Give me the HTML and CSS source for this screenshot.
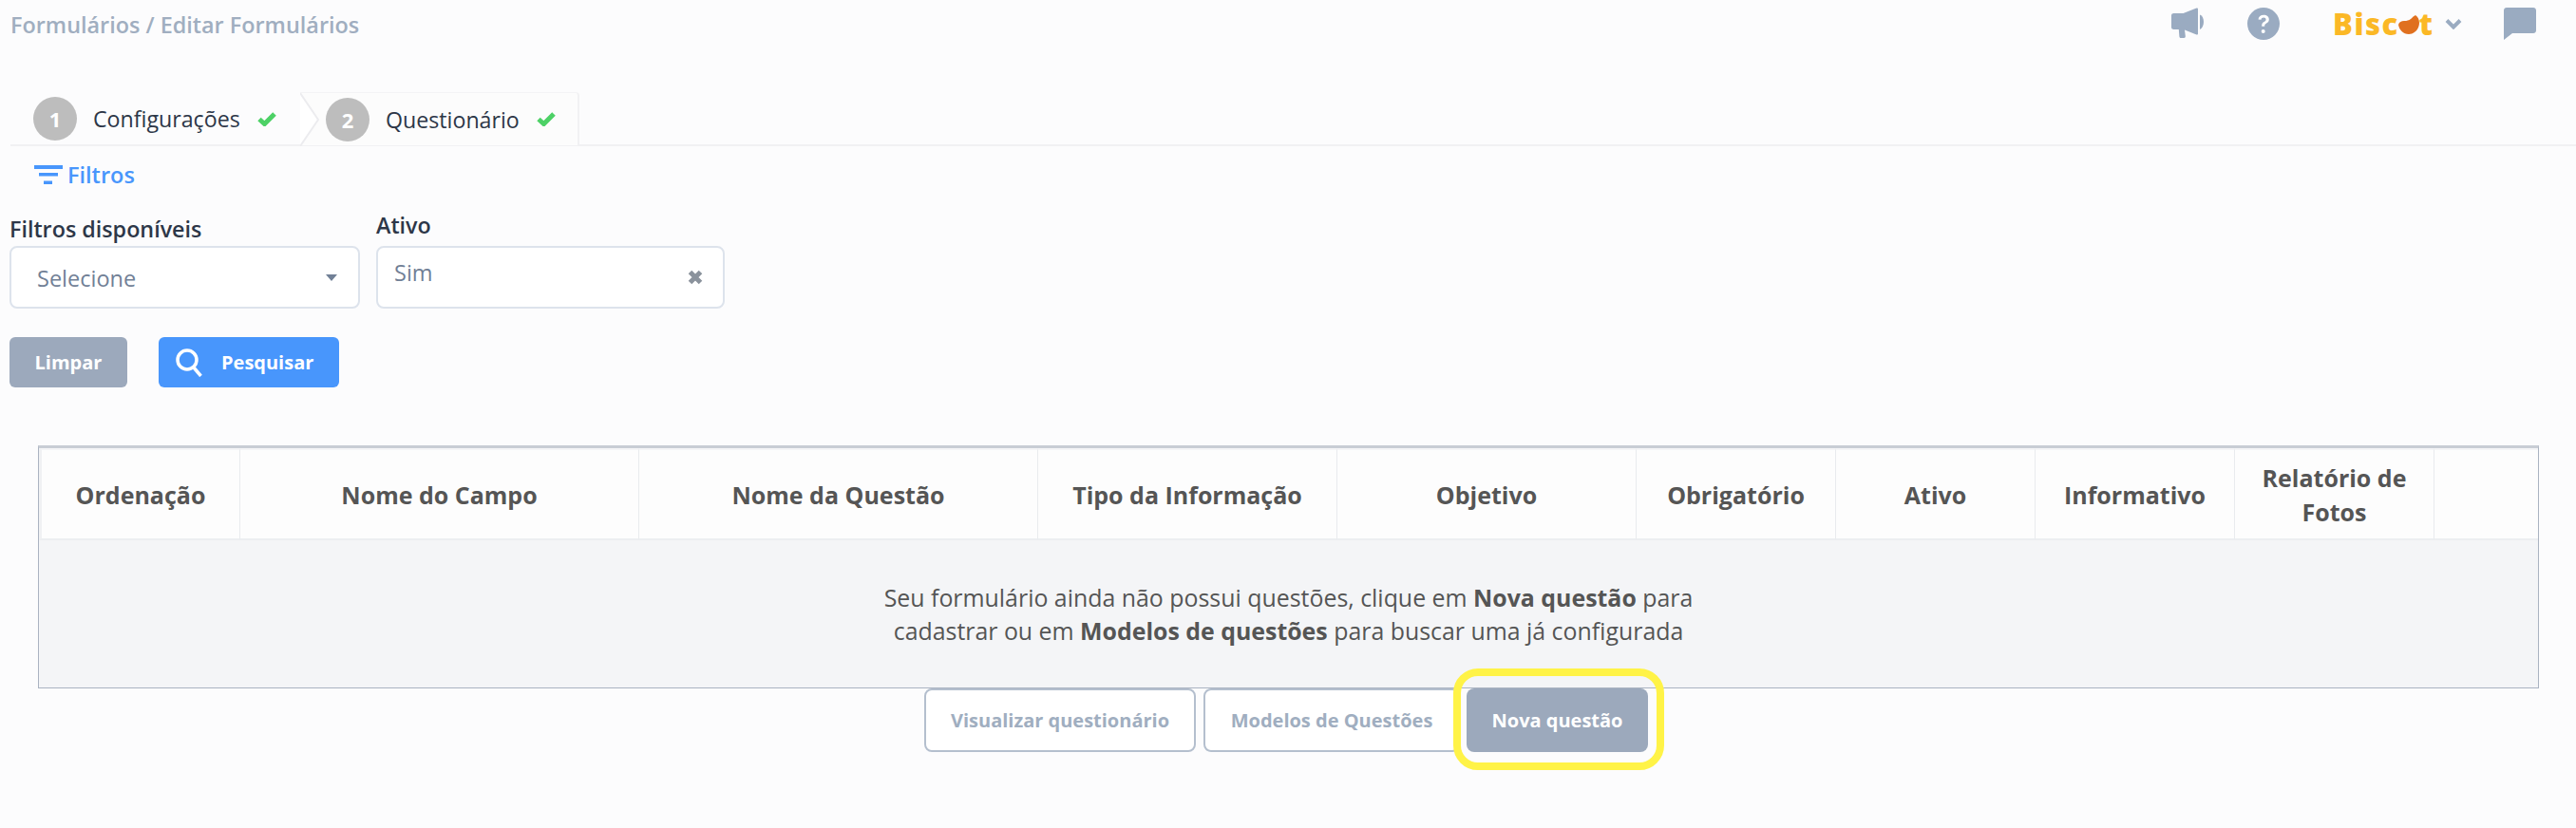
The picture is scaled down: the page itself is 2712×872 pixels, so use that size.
FILE: index.html
```html
<!DOCTYPE html>
<html lang="en">

<head>
    <meta charset="UTF-8" />
    <title>Editar Formulários</title>
    <link rel="stylesheet" href="styles.css">
</head>

<body>
    <header class="topbar">
        <div class="breadcrumb">Formulários / Editar Formulários</div>
        <div class="top-actions">
            <svg class="icon-mega" viewBox="0 0 34 34"><path d="M2.500 6H12.500L26.500.5c.9-.3 1.500.2 1.500 1v26c0 .8-.6 1.300-1.500 1L14 23.500l.8 6.500c.2 1.300-.5 2-1.500 2h-3.300c-1 0-1.500-.6-1.600-1.500L7.800 23H2.500C1 23 0 22 0 20.500v-12C0 7 1 6 2.500 6z" /><path d="M30 7.500c2.700 1 4 4 4 7.500s-1.300 6.700-4 8z" /></svg>
            <svg class="icon-help" viewBox="0 0 34 34"><circle cx="17" cy="17" r="17" fill="#9aabc1" /><path d="M11.500 12.500c.3-3.100 2.500-4.800 5.700-4.800 3.300 0 5.600 1.900 5.600 4.700 0 2-1 3.100-2.700 4.200-1.500 1-1.900 1.600-1.900 3.100h-3c-.1-2.300.6-3.500 2.300-4.600 1.400-.9 2.100-1.500 2.100-2.600 0-1.200-1-2-2.400-2-1.500 0-2.500.9-2.700 2.200z" fill="#fff" /><circle cx="16.700" cy="25" r="2" fill="#fff" /></svg>
            <div class="logo-wrap">
                <div class="logo">Bisc<svg class="cookie" viewBox="0 0 22 20"><path d="M0 10C1 7 3 6 6 6c3 0 5-.5 7-2 1.500-1 3-3 5-4 2.500 1.500 4 4.500 4 8 0 6.500-5 12-11 12C5 20 1 15.500 0 10z" /></svg>t</div>
                <svg class="chevron" viewBox="0 0 18 12"><path d="M2 2.500l7 7 7-7" /></svg>
            </div>
            <svg class="icon-chat" viewBox="0 0 34 34"><path d="M3 0h28c1.700 0 3 1.300 3 3v21c0 1.700-1.300 3-3 3H9l-9 7V3c0-1.700 1.300-3 3-3z" /></svg>
        </div>
    </header>

    <nav class="tabs">
        <div class="tab tab-first">
            <span class="tab-num">1</span>
            <span class="tab-label">Configurações</span>
            <svg class="tab-check" viewBox="0 0 20 15"><path d="M2 7.500l5.500 5L18 2" /></svg>
        </div>
        <div class="tab tab-second">
            <svg class="tab-arrow" viewBox="0 0 20 56"><path d="M0 0l19 28L0 56" /></svg>
            <span class="tab-num">2</span>
            <span class="tab-label">Questionário</span>
            <svg class="tab-check" viewBox="0 0 20 15"><path d="M2 7.500l5.500 5L18 2" /></svg>
        </div>
    </nav>

    <div class="filter-link">
        <svg class="filter-icon" viewBox="0 0 30 20"><rect x="0" y="0" width="30" height="4" /><rect x="5" y="8" width="20" height="3.500" /><rect x="10" y="16.500" width="9" height="3.500" /></svg>
        <span>Filtros</span>
    </div>

    <div class="filter-form">
        <div class="field field-select">
            <label>Filtros disponíveis</label>
            <div class="input">
                <span>Selecione</span>
                <span class="caret"></span>
            </div>
        </div>
        <div class="field field-tag">
            <label>Ativo</label>
            <div class="input">
                <span class="tag-value">Sim</span>
                <svg class="tag-clear" viewBox="0 0 16 16"><path d="M2.500 2.500l11 11M13.500 2.500l-11 11" /></svg>
            </div>
        </div>
    </div>

    <div class="filter-buttons">
        <button class="btn btn-gray btn-clear">Limpar</button>
        <button class="btn btn-blue">
            <svg class="search-icon" viewBox="0 0 28 30"><circle cx="12" cy="12" r="10" /><path d="M18.500 19.500L26.500 29" /></svg>
            Pesquisar
        </button>
    </div>

    <div class="table-wrap">
        <table class="questions">
            <thead>
                <tr>
                    <th class="col-order">Ordenação</th>
                    <th class="col-wide">Nome do Campo</th>
                    <th class="col-wide">Nome da Questão</th>
                    <th class="col-mid">Tipo da Informação</th>
                    <th class="col-mid">Objetivo</th>
                    <th class="col-small">Obrigatório</th>
                    <th class="col-small">Ativo</th>
                    <th class="col-small">Informativo</th>
                    <th class="col-small">Relatório de<br>Fotos</th>
                    <th></th>
                </tr>
            </thead>
            <tbody>
                <tr>
                    <td colspan="10">
                        Seu formulário ainda não possui questões, clique em <b>Nova questão</b> para<br>
                        cadastrar ou em <b>Modelos de questões</b> para buscar uma já configurada
                    </td>
                </tr>
            </tbody>
        </table>
    </div>

    <div class="table-buttons">
        <button class="btn btn-outline btn-preview">Visualizar questionário</button>
        <button class="btn btn-outline btn-models">Modelos de Questões</button>
        <button class="btn btn-gray btn-new">
            Nova questão
            <span class="highlight"></span>
        </button>
    </div>
</body>

</html>
```

FILE: styles.css
```css
* {
    margin: 0;
    padding: 0;
    box-sizing: border-box;
    font-family: 'Open Sans', sans-serif;
}

body {
    background-color: #fcfcfd;
    color: #2d3748;
    height: 872px;
    overflow: hidden;
}

.topbar {
    display: flex;
    justify-content: space-between;
    align-items: flex-start;
    height: 92px;
    padding: 8px 42px 0 11px;
}

.breadcrumb {
    font-size: 23.4px;
    font-weight: 600;
    line-height: 36px;
    color: #a0aec0;
}

.top-actions {
    display: flex;
    align-items: center;
    height: 34px;
    color: #9aabc1;
}

.top-actions svg {
    fill: #9aabc1;
}

.icon-mega {
    width: 34px;
    height: 34px;
    margin-right: 46px;
}

.icon-help {
    width: 34px;
    height: 34px;
    margin-right: 56px;
}

.logo-wrap {
    display: flex;
    align-items: center;
    margin-right: 44px;
}

.logo {
    display: flex;
    align-items: center;
    width: 108px;
    font-size: 31px;
    font-weight: 800;
    letter-spacing: 1.500px;
    line-height: 34px;
    color: #fbb826;
}

.top-actions .cookie {
    flex: none;
    width: 22px;
    height: 20px;
    margin: 2px 0 0 -1px;
    fill: #e0701f;
}

.top-actions .chevron {
    width: 18px;
    height: 12px;
    margin-left: 10px;
    fill: none;
    stroke: #9aabc1;
    stroke-width: 4;
}

.icon-chat {
    width: 34px;
    height: 34px;
}

.tabs {
    display: flex;
    height: 62px;
    margin: 0 0 0 11px;
    padding-top: 5px;
    border-bottom: 2px solid #f1f1f3;
}

.tab {
    display: flex;
    align-items: center;
    height: 56px;
    font-size: 23.2px;
    color: #2d3748;
}

.tab-first {
    width: 305px;
    padding-left: 24px;
}

.tab-second {
    position: relative;
    width: 294px;
    padding-left: 27px;
    margin-bottom: -1px;
    background-color: #fcfcfc;
    border-top: 1px solid #f3f3f5;
    border-right: 2px solid #f1f1f3;
    border-radius: 0 4px 0 0;
}

.tab-arrow {
    position: absolute;
    left: 0;
    top: 0;
    width: 20px;
    height: 56px;
    fill: #ffffff;
    stroke: #ececef;
    stroke-width: 2;
}

.tab-num {
    flex: none;
    width: 46px;
    height: 46px;
    margin-right: 17px;
    border-radius: 50%;
    background-color: #bdbdbd;
    color: #fff;
    font-weight: 700;
    font-size: 22px;
    line-height: 46px;
    text-align: center;
}

.tab-check {
    width: 20px;
    height: 15px;
    margin-left: 18px;
    fill: none;
    stroke: #4dd166;
    stroke-width: 5;
}

.filter-link {
    display: flex;
    align-items: center;
    height: 34px;
    margin-top: 13px;
    padding-left: 36px;
    font-size: 23.5px;
    font-weight: 600;
    color: #4896fc;
}

.filter-icon {
    width: 30px;
    height: 20px;
    margin-right: 5px;
    fill: #4896fc;
}

.filter-form {
    display: flex;
    align-items: flex-end;
    gap: 17px;
    margin-top: 21px;
    padding-left: 10px;
}

.field-select {
    width: 369px;
}

.field-tag {
    width: 367px;
}

.field label {
    display: block;
    font-size: 23.3px;
    font-weight: 600;
    line-height: 30px;
    color: #2d3748;
}

.field-select label {
    margin-bottom: 3px;
}

.field-tag label {
    margin-bottom: 7px;
}

.input {
    display: flex;
    justify-content: space-between;
    align-items: center;
    height: 66px;
    background-color: #fff;
    border: 2px solid #dde3ec;
    border-radius: 8px;
    font-size: 23.500px;
    color: #718096;
}

.field-select .input {
    padding: 1px 22px 0 27px;
}

.field-tag .input {
    padding: 0 21px 0 17px;
}

.tag-value {
    margin-top: -10px;
}

.caret {
    width: 0;
    height: 0;
    border-left: 6.500px solid transparent;
    border-right: 6.500px solid transparent;
    border-top: 7px solid #718096;
}

.tag-clear {
    width: 16px;
    height: 16px;
    fill: none;
    stroke: #8a929c;
    stroke-width: 5;
}

.filter-buttons {
    display: flex;
    gap: 33px;
    margin-top: 30px;
    padding-left: 10px;
}

.btn {
    height: 53px;
    border: none;
    border-radius: 6px;
    font-size: 20px;
    font-weight: 700;
    color: #fff;
}

.btn-gray {
    background-color: #9ca9bc;
}

.btn-blue {
    background-color: #4896fc;
}

.btn-clear {
    width: 124px;
}

.btn-blue {
    display: flex;
    align-items: center;
    width: 190px;
    padding-left: 18px;
}

.search-icon {
    width: 28px;
    height: 30px;
    margin-right: 20px;
    fill: none;
    stroke: #fff;
    stroke-width: 3.500;
}

.table-wrap {
    margin: 61px 40px 0;
}

.questions {
    width: 2633px;
    height: 256px;
    table-layout: fixed;
    border-collapse: separate;
    border-spacing: 0;
    border: 1px solid #aab3c1;
    border-top: 3px solid #c8cdd5;
    background-color: #f4f5f7;
}

.questions th {
    height: 97px;
    background-color: #fdfdfd;
    border-top: 2px solid #f4f5f7;
    border-right: 1px solid #e9ebee;
    border-bottom: 2px solid #eceef1;
    font-size: 25px;
    font-weight: 700;
    line-height: 36px;
    color: #555555;
}

.questions th:last-child {
    border-right: none;
}

.questions th:first-child {
    border-left: 3px solid #f0f1f3;
}

.col-order {
    width: 212px;
}

.col-wide {
    width: 420px;
}

.col-mid {
    width: 315px;
}

.col-small {
    width: 210px;
}

.questions td {
    text-align: center;
    font-size: 24.9px;
    line-height: 35px;
    color: #555555;
}

.table-buttons {
    display: flex;
    padding-left: 973px;
}

.table-buttons .btn {
    height: 67px;
    font-size: 20px;
}

.btn-outline {
    background-color: #fff;
    border: 2px solid #b4bfce;
    border-radius: 8px;
    color: #a0aec0;
}

.btn-preview {
    width: 286px;
    margin-right: 8px;
}

.btn-models {
    width: 270px;
    margin-right: 7px;
}

.table-buttons .btn-new {
    position: relative;
    width: 191px;
    border-radius: 8px;
}

.highlight {
    position: absolute;
    left: -14px;
    right: -17px;
    top: -21px;
    bottom: -19px;
    border: 8px solid #fff347;
    border-radius: 26px;
}
```
